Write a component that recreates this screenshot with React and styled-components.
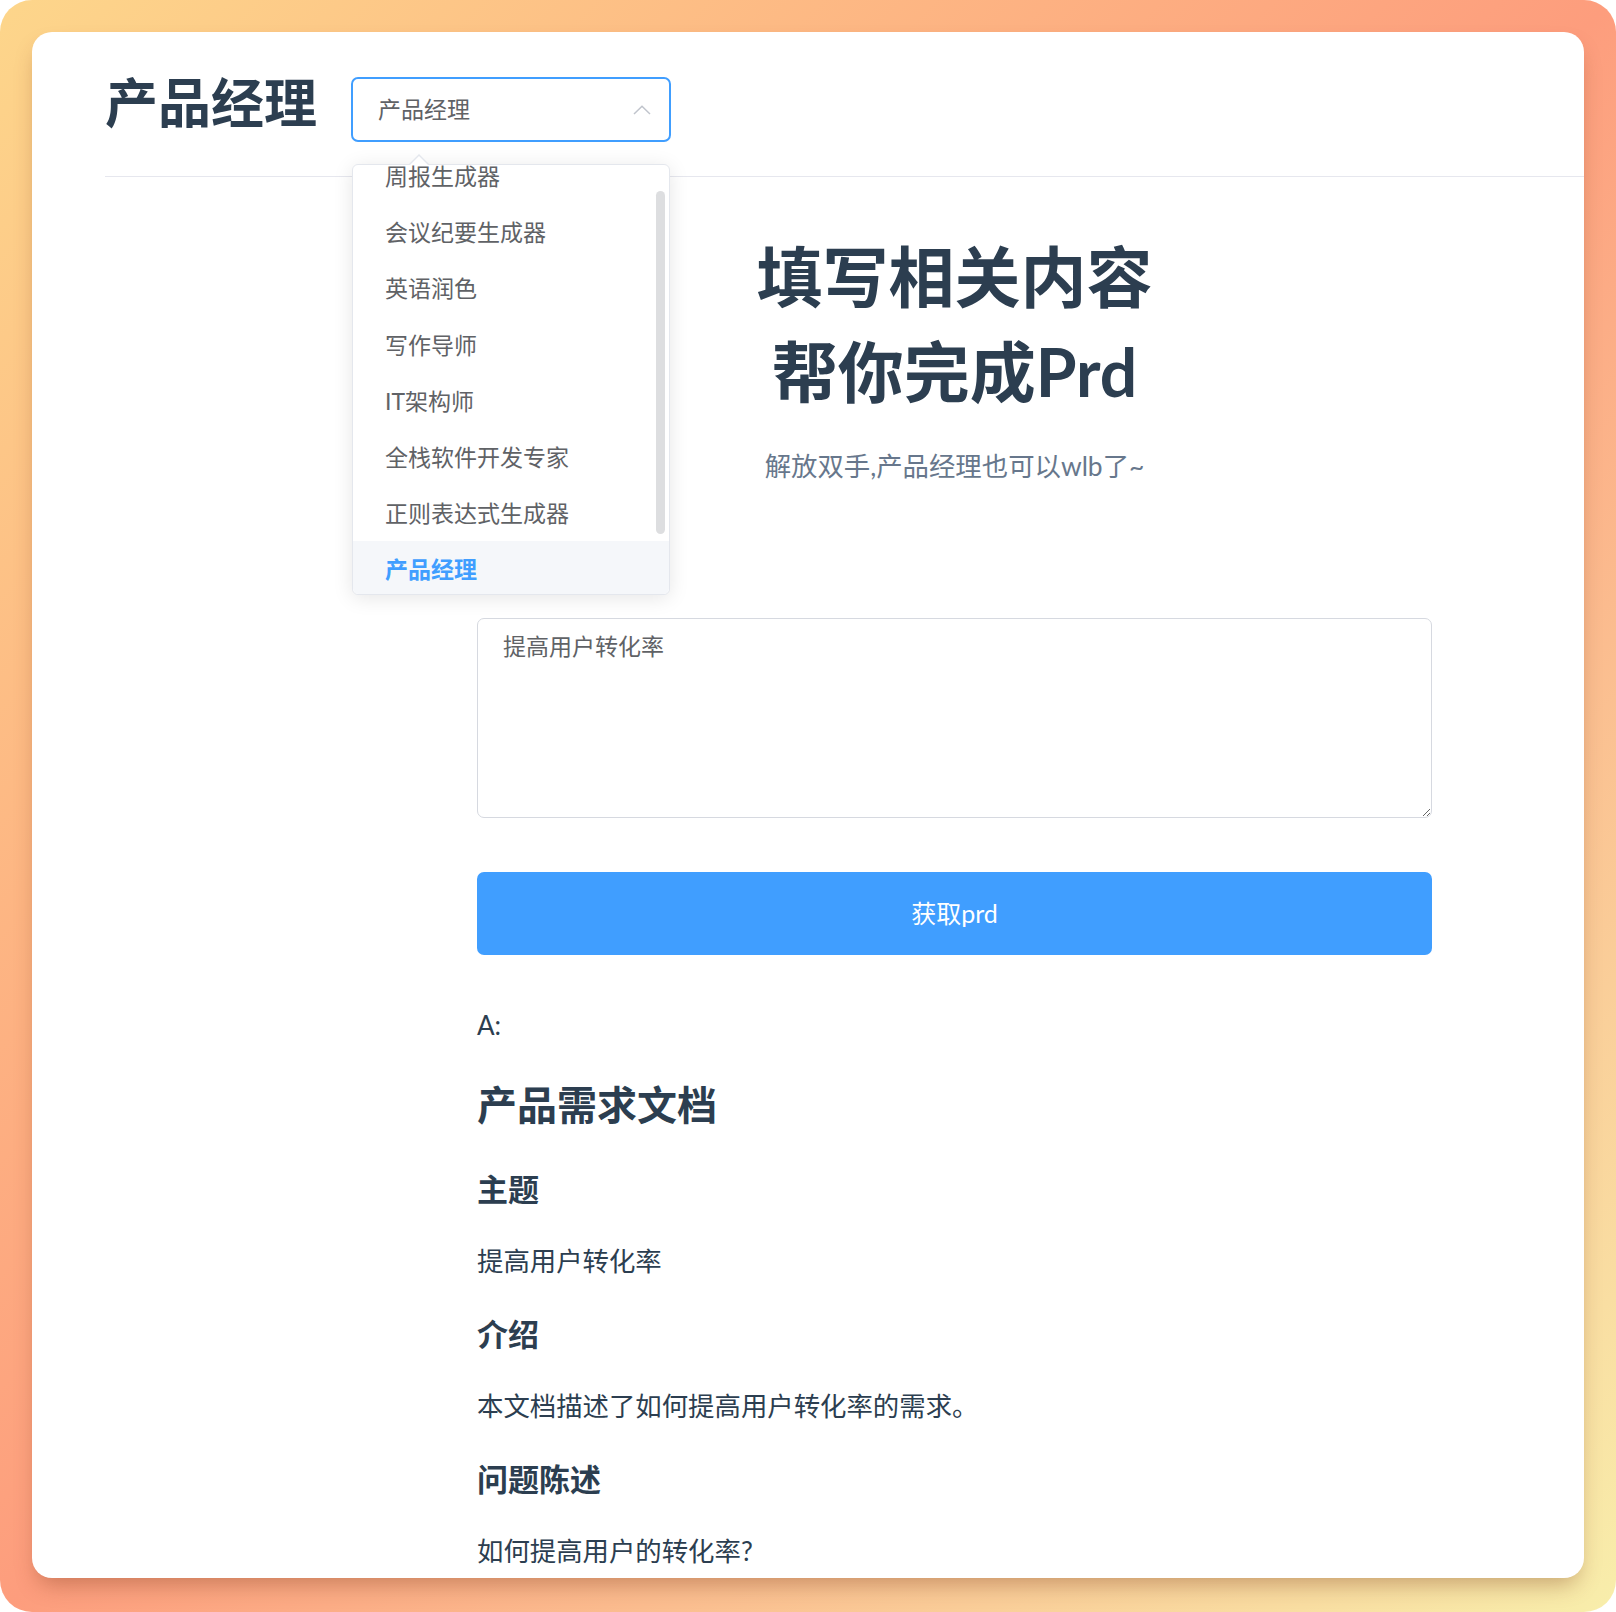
import React from 'react'
import styled, { createGlobalStyle } from 'styled-components'

const GlobalStyle = createGlobalStyle`
  html, body {
    margin: 0;
    padding: 0;
    background: #fff;
  }
  body {
    font-family: "Lato", "Noto Sans CJK SC", sans-serif;
    color: #2c3e50;
  }
  * {
    box-sizing: border-box;
  }
`

const roles = [
  '周报生成器',
  '会议纪要生成器',
  '英语润色',
  '写作导师',
  'IT架构师',
  '全栈软件开发专家',
  '正则表达式生成器',
  '产品经理',
]

const Frame = styled.div`
  width: 1616px;
  height: 1612px;
  padding: 32px 32px 34px 32px;
  border-radius: 32px;
  background: linear-gradient(135deg, #fdd68b 0%, #fd9d7d 50%, #f8eeab 100%);
`

const Card = styled.div`
  height: 100%;
  background: #fff;
  border-radius: 20px;
  overflow: hidden;
  box-shadow: 0 12px 22px -6px rgba(120, 55, 25, 0.38);
`

const Header = styled.header`
  display: flex;
  align-items: flex-start;
  gap: 34px;
  margin-left: 73px;
  padding: 45px 0 34px;
  border-bottom: 1px solid #e6e7ee;
`

const PageTitle = styled.h1`
  margin: -7px 0 0;
  font-size: 53px;
  line-height: 65px;
  font-weight: 700;
  color: #2c3e50;
  white-space: nowrap;
`

const SelectWrap = styled.div`
  position: relative;
  width: 320px;
`

const SelectBox = styled.div`
  display: flex;
  align-items: center;
  justify-content: space-between;
  height: 65px;
  padding: 0 18px 3px 25px;
  border: 2px solid #409eff;
  border-radius: 7px;
  font-size: 23px;
  color: #606266;
  background: #fff;

  svg {
    margin-top: 3px;
  }
`

const Chevron = () => (
  <svg width="18" height="10" viewBox="0 0 18 10" fill="none">
    <polyline points="1,9 9,1.2 17,9" stroke="#c0c4cc" strokeWidth="1.5" />
  </svg>
)

const Dropdown = styled.div`
  position: absolute;
  top: 87px;
  left: 1px;
  width: 318px;
  height: 431px;
  background: #fff;
  border: 1px solid #e4e7ed;
  border-radius: 6px;
  box-shadow: 0 3px 20px rgba(0, 0, 0, 0.1);
  z-index: 10;

  &::before,
  &::after {
    content: '';
    position: absolute;
    left: 56px;
    width: 0;
    height: 0;
    border-style: solid;
    border-color: transparent;
  }
  &::before {
    top: -11px;
    border-width: 0 10px 10px;
    border-bottom-color: #e4e7ed;
  }
  &::after {
    top: -9px;
    left: 57px;
    border-width: 0 9px 9px;
    border-bottom-color: #fff;
  }
`

const Viewport = styled.div`
  height: 100%;
  overflow: hidden;
  border-radius: 6px;
`

const OptionList = styled.ul`
  list-style: none;
  margin: ${(p) => -p.$offset}px 0 0;
  padding: 10px 0;
`

const Option = styled.li`
  height: 56.2px;
  line-height: 56.2px;
  padding: 0 32px;
  font-size: 23px;
  white-space: nowrap;
  color: ${(p) => (p.$active ? '#409eff' : '#606266')};
  font-weight: ${(p) => (p.$active ? 700 : 400)};
  background: ${(p) => (p.$active ? '#f5f7fa' : 'transparent')};
`

const ScrollThumb = styled.div`
  position: absolute;
  top: 26px;
  right: 4px;
  width: 9px;
  height: 343px;
  border-radius: 5px;
  background: rgba(144, 147, 153, 0.3);
`

const Main = styled.main`
  width: 955px;
  margin-left: 445px;
`

const Hero = styled.h1`
  margin: 52px 0 0;
  text-align: center;
  font-size: 66px;
  line-height: 95px;
  font-weight: 700;
  color: #2c3e50;
`

const Subtitle = styled.p`
  margin: 29px 0 0;
  text-align: center;
  font-size: 26.4px;
  line-height: 36px;
  color: #67778c;
`

const Label = styled.div`
  margin-top: ${(p) => p.$top}px;
  font-size: 26px;
  line-height: 36px;
  color: #2c3e50;
`

const Prompt = styled.textarea`
  display: block;
  width: 100%;
  height: 200px;
  margin-top: 42px;
  padding: 8px 25px;
  border: 1px solid #d6d9e0;
  border-radius: 7px;
  font-family: inherit;
  font-size: 23px;
  line-height: 38px;
  color: #606266;
  resize: vertical;
  outline: none;
`

const SubmitButton = styled.button`
  display: block;
  width: 100%;
  height: 83px;
  margin-top: 54px;
  padding: 0 0 3px;
  border: none;
  border-radius: 7px;
  background: #409eff;
  color: #fff;
  font-family: inherit;
  font-size: 25px;
  cursor: pointer;
`

const Doc = styled.article`
  h2 {
    margin: 32px 0 0;
    font-size: 40px;
    line-height: 60px;
    font-weight: 700;
  }
  h3 {
    margin: 31px 0 32px;
    font-size: 31px;
    line-height: 46px;
    font-weight: 700;
  }
  p {
    margin: 32px 0;
    font-size: 26.4px;
    line-height: 35px;
  }
`

export default function App() {
  return (
    <>
      <GlobalStyle />
      <Frame>
        <Card>
          <Header>
            <PageTitle>产品经理</PageTitle>
            <SelectWrap>
              <SelectBox>
                <span>产品经理</span>
                <Chevron />
              </SelectBox>
              <Dropdown>
                <Viewport>
                  <OptionList $offset={27}>
                    {roles.map((r) => (
                      <Option key={r} $active={r === '产品经理'}>
                        {r}
                      </Option>
                    ))}
                  </OptionList>
                </Viewport>
                <ScrollThumb />
              </Dropdown>
            </SelectWrap>
          </Header>

          <Main>
            <Hero>
              填写相关内容
              <br />
              帮你完成Prd
            </Hero>
            <Subtitle>解放双手,产品经理也可以wlb了~</Subtitle>

            <Label $top={56}>Q:</Label>
            <Prompt defaultValue="提高用户转化率" />
            <SubmitButton type="button">获取prd</SubmitButton>

            <Label $top={52}>A:</Label>
            <Doc>
              <h2>产品需求文档</h2>
              <h3>主题</h3>
              <p>提高用户转化率</p>
              <h3>介绍</h3>
              <p>本文档描述了如何提高用户转化率的需求。</p>
              <h3>问题陈述</h3>
              <p>如何提高用户的转化率?</p>
            </Doc>
          </Main>
        </Card>
      </Frame>
    </>
  )
}
